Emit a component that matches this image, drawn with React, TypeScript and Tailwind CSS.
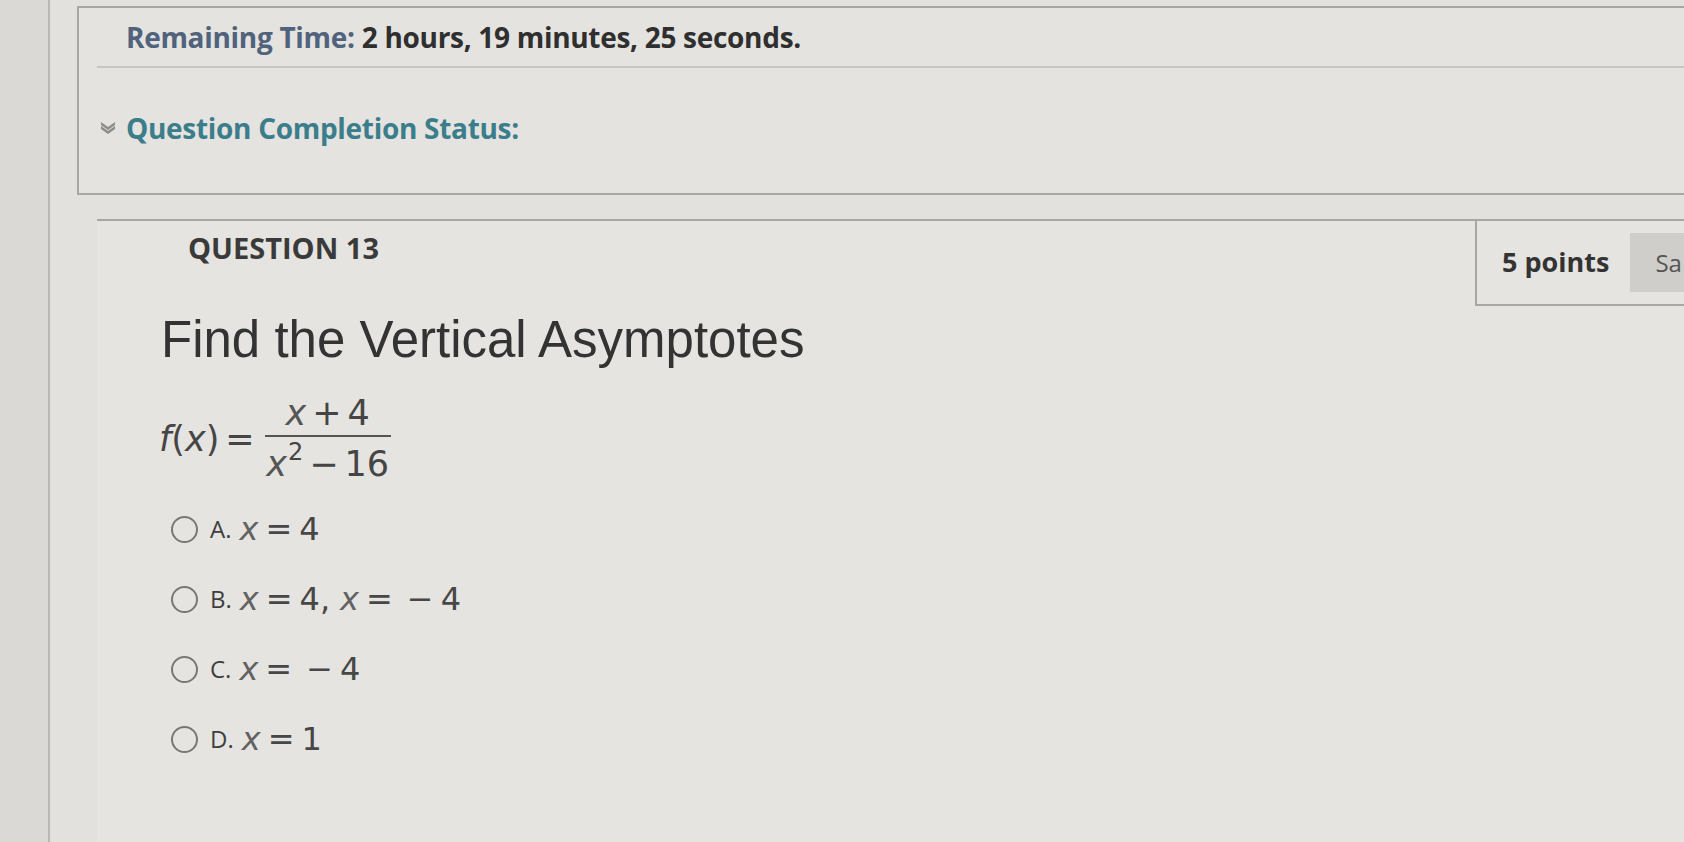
import React from "react";

const ui = { fontFamily: '"Open Sans", "Noto Sans", sans-serif' };
const math = { fontFamily: '"DejaVu Sans", "Open Sans", sans-serif' };

function Chevrons() {
  return (
    <svg width="16" height="14" viewBox="0 0 16 14" className="shrink-0">
      <path d="M1 1 L8 6 L15 1 L15 4 L8 9 L1 4 Z" fill="#8d8b8b" />
      <path d="M1 5 L8 10 L15 5 L15 8 L8 13 L1 8 Z" fill="#8d8b8b" />
    </svg>
  );
}

function X() {
  return <i className="text-[#626262]">x</i>;
}

type Option = { letter: string; answer: React.ReactNode };

const options: Option[] = [
  {
    letter: "A.",
    answer: (
      <>
        <X />
        <span className="mx-[7px]">=</span>4
      </>
    ),
  },
  {
    letter: "B.",
    answer: (
      <>
        <X />
        <span className="mx-[7px]">=</span>4,
        <span className="ml-[10px]" />
        <X />
        <span className="mx-[7px]">=</span>
        <span className="mx-[7px]">−</span>4
      </>
    ),
  },
  {
    letter: "C.",
    answer: (
      <>
        <X />
        <span className="mx-[7px]">=</span>
        <span className="mx-[7px]">−</span>4
      </>
    ),
  },
  {
    letter: "D.",
    answer: (
      <>
        <X />
        <span className="mx-[7px]">=</span>1
      </>
    ),
  },
];

export default function App() {
  return (
    <div className="flex h-[842px] w-full overflow-hidden bg-[#e2e1dd]">
      {/* left gutter */}
      <div className="w-[50px] shrink-0 bg-[#dad9d5] border-r-2 border-[#b9b8b4]" />

      <div className="flex-1 flex flex-col">
        {/* timer / status box */}
        <div className="mt-[6px] ml-[27px] h-[189px] border-l-2 border-t-2 border-b-2 border-[#a8a7a3] bg-[#e4e3df] flex flex-col">
          <div
            className="h-[58px] flex items-center pl-[47px] text-[28px] font-bold tracking-[-0.3px]"
            style={ui}
          >
            <span className="text-[#50627c]">Remaining Time:</span>
            <span className="ml-[7px] text-[#2f2f2f]">2 hours, 19 minutes, 25 seconds.</span>
          </div>
          <div className="ml-[18px] border-t-2 border-[#c6c5c1]" />
          <div className="flex-1 flex items-center pl-[21px] gap-[10px] pb-[6px]">
            <Chevrons />
            <span
              className="text-[28px] font-bold text-[#3c7d8c] tracking-[-0.3px]"
              style={ui}
            >
              Question Completion Status:
            </span>
          </div>
        </div>

        {/* question */}
        <div className="mt-[24px] ml-[47px] flex-1 border-t-2 border-[#a8a7a3] bg-[#e5e4e0] flex flex-col">
          <div className="flex justify-between items-start">
            <div
              className="pl-[91px] pt-[10px] text-[29px] leading-[34px] font-bold text-[#3a3a3a]"
              style={ui}
            >
              QUESTION 13
            </div>
            <div className="w-[209px] h-[85px] border-l-2 border-b-2 border-[#a8a7a3] flex items-center pl-[25px]">
              <span
                className="text-[27px] font-bold text-[#333333] whitespace-nowrap"
                style={ui}
              >
                5 points
              </span>
              <div
                className="ml-[21px] h-[59px] flex-1 bg-[#cfcecb] flex items-center pl-[25px] text-[24px] text-[#555555] overflow-hidden"
                style={ui}
              >
                Sa
              </div>
            </div>
          </div>

          <div
            className="mt-[5px] pl-[64px] text-[51px] leading-[58px] text-[#333333]"
            style={{ fontFamily: '"Liberation Sans", Arial, sans-serif' }}
          >
            Find the Vertical Asymptotes
          </div>

          {/* f(x) = (x+4)/(x^2-16) */}
          <div
            className="mt-[22px] pl-[62px] flex items-center text-[35px] text-[#454545]"
            style={math}
          >
            <span>
              <i>f</i>(<i>x</i>)
            </span>
            <span className="ml-[6px] mr-[10px]">=</span>
            <div className="flex flex-col w-[126px]">
              <div className="h-[44px] flex items-center justify-center">
                <i className="text-[#555555]">x</i>
                <span className="mx-[6px]">+</span>4
              </div>
              <div className="h-[2px] bg-[#555555]" />
              <div className="h-[50px] flex items-center justify-center pt-[4px]">
                <i className="text-[#555555]">x</i>
                <sup className="text-[24px] ml-[1px]">2</sup>
                <span className="mx-[6px]">−</span>16
              </div>
            </div>
          </div>

          {/* answers */}
          <div className="mt-[7px] pl-[74px] flex flex-col">
            {options.map((o) => (
              <div key={o.letter} className="h-[70px] flex items-center">
                <div className="w-[27px] h-[27px] rounded-full border-2 border-[#777777] shrink-0" />
                <span
                  className="ml-[12px] text-[24px] text-[#3f3f3f]"
                  style={ui}
                >
                  {o.letter}
                </span>
                <span className="ml-[8px] text-[32px] text-[#474747]" style={math}>
                  {o.answer}
                </span>
              </div>
            ))}
          </div>
        </div>
      </div>
    </div>
  );
}
